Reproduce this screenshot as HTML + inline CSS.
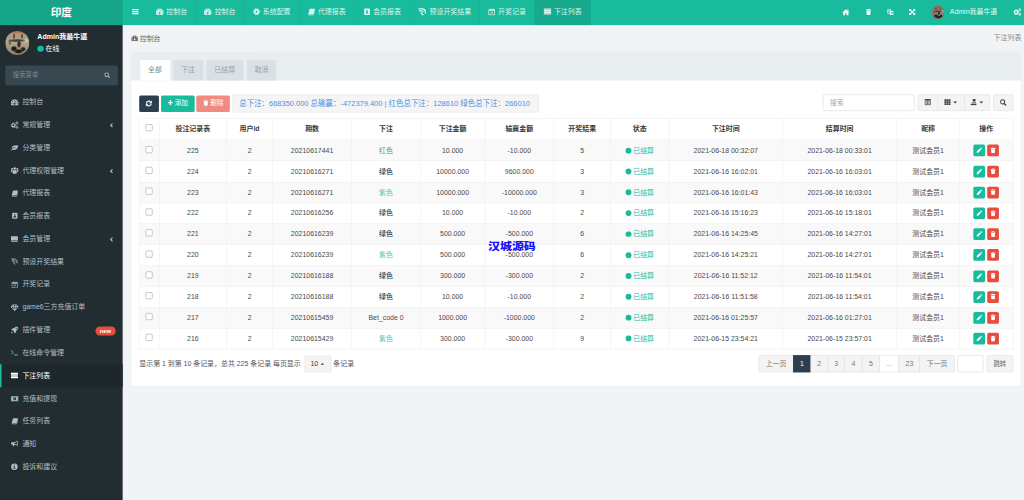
<!DOCTYPE html><html lang="zh-CN"><head><meta charset="utf-8"><title>印度</title><style>
*{box-sizing:border-box;margin:0;padding:0}
html,body{width:1024px;height:500px;overflow:hidden;background:#f1f4f6}
body{font-family:"Liberation Sans","Noto Sans CJK SC",sans-serif;font-size:13px;color:#444}
#pg{position:absolute;left:0;top:0;width:1920px;height:938px;transform:scale(.5333333);transform-origin:0 0;background:#f1f4f6;overflow:hidden}
.ic{fill:currentColor;vertical-align:middle;display:inline-block}
.abs{position:absolute}
#hdr{position:absolute;left:0;top:0;width:1920px;height:47px;background:#18bc9c}
#logo{position:absolute;left:0;top:0;width:230px;height:47px;background:#15a589;color:#fff;font-size:20px;font-weight:bold;text-align:center;line-height:46px}
.ttab{position:absolute;top:0;height:47px;line-height:43px;color:rgba(255,255,255,.86);font-size:13px;text-align:center;border-right:1px solid rgba(0,0,0,.06);white-space:nowrap}
.ttab .ic{margin-right:5px;position:relative;top:-1px}
.ttab.act{background:#16a98c}
.hic{position:absolute;top:0;height:47px;line-height:43px;color:#fff;text-align:center;width:30px}
#side{position:absolute;left:0;top:47px;width:230px;height:891px;background:#222d32}
.mi{position:absolute;left:0;width:230px;height:42.6px;line-height:42.6px;color:#b0bfc6;font-size:13px;white-space:nowrap}
.mi .ic{position:absolute;left:20px;top:13.800px}
.mi span.t{position:absolute;left:42px}
.mi .chev{position:absolute;left:203px;top:16px;color:#b8c7ce;line-height:0}
.mi.act{background:#1e282c;color:#fff;border-left:3px solid #18bc9c}
.mi.act .ic{left:17px}.mi.act span.t{left:39px}
.btn{position:absolute;border-radius:3px;text-align:center;white-space:nowrap;font-size:13px}
table{border-collapse:collapse;table-layout:fixed;position:absolute;left:261.2px;top:221.8px;width:1638px;font-size:13px;color:#4a4a4a}
th,td{border:1px solid #ececec;text-align:center;vertical-align:middle;white-space:nowrap;overflow:hidden;padding:0;line-height:18px}
th{height:40.5px;font-weight:bold;color:#3a3a3a;padding-bottom:1.500px}
td{height:39.2px}
tbody tr:nth-child(odd){background:#f9f9f9}
.cb{display:inline-block;width:13px;height:13px;border:1px solid #999;border-radius:2.500px;background:#fff;vertical-align:middle;position:relative;top:-2.800px}
.ok{color:#18bc9c}
.dot{display:inline-block;width:10.800px;height:10.800px;border-radius:50%;background:#18bc9c;margin-right:3.500px;position:relative;top:1.200px}
.ab{display:inline-block;width:22.300px;height:22px;border-radius:3px;color:#fff;line-height:19px;vertical-align:middle}
.pg{position:absolute;top:665.6px;height:32.600px;line-height:31px;border:1px solid #ddd;background:#f4f4f4;color:#777;text-align:center;font-size:13px;margin-left:-1px}
</style></head><body><div id="pg">
<div id="hdr">
<div id="logo">印度</div>
<div class="abs" style="left:247px;top:15px;color:#fff;line-height:0"><svg class="ic" viewBox="0 0 16 16" width="13.5" height="13.5" style=""><path d="M1 2.200h14v2.700H1zM1 6.650h14v2.700H1zM1 11.100h14v2.700H1z"/></svg></div>
<div class="ttab" style="left:276.6px;width:90.40px"><svg class="ic" viewBox="0 0 16 16" width="15" height="15" style=""><path fill-rule="evenodd" d="M8 2a8 8 0 0 1 6.9 12c-.2.3-.4.4-.8.4H1.900c-.4 0-.6-.1-.8-.4A8 8 0 0 1 8 2zM8 3.200a1 1 0 1 0 0 2 1 1 0 0 0 0-2zM3.700 5a1 1 0 1 0 0 2 1 1 0 0 0 0-2zM12.300 5a1 1 0 1 0 0 2 1 1 0 0 0 0-2zM2.300 9a1 1 0 1 0 0 2 1 1 0 0 0 0-2zM13.700 9a1 1 0 1 0 0 2 1 1 0 0 0 0-2zM9.800 6.200l-1 3.600a1.800 1.800 0 1 1-1.100-.3l1-3.600z"/></svg>控制台</div>
<div class="ttab" style="left:367px;width:91.00px"><svg class="ic" viewBox="0 0 16 16" width="15" height="15" style=""><path fill-rule="evenodd" d="M8 2a8 8 0 0 1 6.9 12c-.2.3-.4.4-.8.4H1.900c-.4 0-.6-.1-.8-.4A8 8 0 0 1 8 2zM8 3.200a1 1 0 1 0 0 2 1 1 0 0 0 0-2zM3.700 5a1 1 0 1 0 0 2 1 1 0 0 0 0-2zM12.300 5a1 1 0 1 0 0 2 1 1 0 0 0 0-2zM2.300 9a1 1 0 1 0 0 2 1 1 0 0 0 0-2zM13.700 9a1 1 0 1 0 0 2 1 1 0 0 0 0-2zM9.800 6.200l-1 3.600a1.800 1.800 0 1 1-1.100-.3l1-3.600z"/></svg>控制台</div>
<div class="ttab" style="left:458px;width:103.60px"><svg class="ic" viewBox="0 0 16 16" width="14" height="14" style=""><g fill="none" stroke="currentColor"><circle cx="8" cy="8" r="3.900" stroke-width="3.600"/><circle cx="8" cy="8" r="6.400" stroke-width="2.200" stroke-dasharray="2.513 2.513"/></g></svg>系统配置</div>
<div class="ttab" style="left:561.6px;width:103.10px"><svg class="ic" viewBox="0 0 16 16" width="14" height="14" style=""><path d="M5.500 1.500h9.200c.6 0 .9.500.7 1.100l-2.600 9.200c-.2.700-.8 1.200-1.500 1.200H3.500c-.4 0-.5.300-.3.600.2.300.6.400 1 .400h7.600c.5 0 .9-.3 1-.8l2.300-8c.4.300.5.800.4 1.300l-2.300 8c-.3.900-1 1.500-2 1.500H3.800c-1.500 0-2.800-1.300-2.500-2.800L3.600 3.300c.3-1 1-1.800 1.900-1.800z"/></svg>代理报表</div>
<div class="ttab" style="left:664.7px;width:104.05px"><svg class="ic" viewBox="0 0 16 16" width="14" height="14" style=""><path fill-rule="evenodd" d="M3.500 1h9.500a1.500 1.500 0 0 1 1.500 1.500v11a1.500 1.500 0 0 1-1.500 1.500H3.500A1.500 1.500 0 0 1 2 13.500v-11A1.500 1.500 0 0 1 3.500 1zM8.200 4.300a1.900 1.900 0 1 0 0 3.800 1.900 1.900 0 0 0 0-3.800zM5 11.800h6.400c0-1.900-1.300-3.200-3.200-3.200S5 9.900 5 11.800z"/></svg>会员报表</div>
<div class="ttab" style="left:768.75px;width:130.25px"><svg class="ic" viewBox="0 0 16 16" width="17" height="17" style=""><path fill="none" stroke="currentColor" stroke-width="2.100" d="M1.500 3.300h7c3 0 5.200 2.500 5.200 5.500v3.200M2.500 7h4.500c1.700 0 2.800 1.200 2.800 2.800M5.500 10.200l4.500 4.500"/></svg>预设开奖结果</div>
<div class="ttab" style="left:899px;width:104.00px"><svg class="ic" viewBox="0 0 16 16" width="14" height="14" style=""><path fill-rule="evenodd" d="M2 2.500h2.200V1h1.700v1.500h4.200V1h1.700v1.500H14c.6 0 1 .4 1 1V14.500c0 .6-.4 1-1 1H2c-.6 0-1-.4-1-1V3.500c0-.6.400-1 1-1zM2.500 6v8h11V6zM5 10l1-1 1.500 1.500L10.500 7.500l1 1L7.500 12.500z"/></svg>开奖记录</div>
<div class="ttab act" style="left:1003px;width:104.20px"><svg class="ic" viewBox="0 0 16 16" width="15" height="15" style=""><path d="M.5 2h15v2.800H.5zM.5 5.300h15v2.600H.5zM.5 8.400h15v2.600H.5zM.5 11.500h15v2.700H.5z"/></svg>下注列表</div>
<div class="hic" style="left:1571px"><svg class="ic" viewBox="0 0 16 16" width="14" height="14" style=""><path d="M8 1.500L15.700 8.300H13.500V14.500H9.600V10.200H6.400V14.500H2.500V8.300H.300zM11.400 1.800h2.100v3.600l-2.100-1.800z"/></svg></div>
<div class="hic" style="left:1613.4px"><svg class="ic" viewBox="0 0 16 16" width="13" height="13" style=""><path d="M6 1h4l.7 1.300H14V4.200H2V2.300h3.300zM3 5.200h10l-.7 8.800c0 .6-.5 1-1 1H4.700c-.5 0-1-.4-1-1z"/></svg></div>
<div class="hic" style="left:1654.5px"><svg class="ic" viewBox="0 0 16 16" width="13" height="13" style=""><path fill-rule="evenodd" d="M1 1.500h8.500v3.500H15v10H6.500v-3.500H1zM2.300 2.800v7.400h4.200V5h1.700V2.800zM9 8v1h3.300c-.3.900-.8 1.700-1.500 2.300-.4-.4-.7-.8-.9-1.300H8.900c.3.700.7 1.400 1.200 1.900-.5.300-1 .5-1.600.7l.4.900c.7-.200 1.400-.500 2-.900.600.400 1.300.700 2 .900l.400-.900c-.600-.200-1.100-.400-1.600-.700.800-.800 1.400-1.800 1.700-2.900H14.500V8H12V7h-1v1z"/><path d="M3.500 4h1.500l1 4.500H5l-.2-1H3.700l-.2 1h-1zM4.200 5l-.3 1.600h.7z"/></svg></div>
<div class="hic" style="left:1695.4px"><svg class="ic" viewBox="0 0 16 16" width="13" height="13" style=""><path d="M3 3L13 13M13 3L3 13" fill="none" stroke="currentColor" stroke-width="2.800"/><path d="M.800.800h5.900L.800 6.700zM15.200.800v5.900L9.300.800zM.800 15.200V9.300l5.900 5.900zM15.200 15.200H9.300l5.900-5.900z"/></svg></div>
<div class="hic" style="left:1892px"><svg class="ic" viewBox="0 0 16 16" width="15" height="15" style=""><g fill="none" stroke="currentColor"><circle cx="5.500" cy="8.500" r="3.200" stroke-width="2.300"/><circle cx="5.500" cy="8.500" r="4.900" stroke-width="1.500" stroke-dasharray="1.924 1.924"/><circle cx="12.700" cy="3.700" r="1.600" stroke-width="1.600"/><circle cx="12.700" cy="3.700" r="2.800" stroke-width="1" stroke-dasharray="1.100 1.100"/><circle cx="12.700" cy="12.600" r="1.600" stroke-width="1.600"/><circle cx="12.700" cy="12.600" r="2.800" stroke-width="1" stroke-dasharray="1.100 1.100"/></g></svg></div>
<div class="abs" style="left:1746px;top:11px;width:25px;height:25px;border-radius:50%;background:radial-gradient(ellipse 40% 7% at 48% 40%,#4a4038 0,#4a4038 50%,transparent 100%),radial-gradient(ellipse 9% 17% at 57% 55%,#3a2822 0,#3a2822 55%,transparent 100%),radial-gradient(ellipse 15% 13% at 36% 74%,#1f1d1c 0,#1f1d1c 50%,transparent 100%),radial-gradient(ellipse 20% 10% at 55% 85%,#1d1b1a 0,#1d1b1a 55%,transparent 100%),radial-gradient(ellipse 12% 11% at 74% 76%,#262220 0,#262220 50%,transparent 100%),radial-gradient(ellipse 7% 15% at 19% 47%,#6d675c 0,#6d675c 50%,transparent 100%),radial-gradient(ellipse 6% 14% at 36% 22%,#5b5348 0,#5b5348 50%,transparent 100%),radial-gradient(ellipse 6% 12% at 70% 22%,#5b5348 0,#5b5348 50%,transparent 100%),radial-gradient(ellipse 7% 9% at 87% 40%,#a9acb4 0,#a9acb4 50%,transparent 100%),linear-gradient(#a8583a 0,#a8583a 5%,#7d7268 11%,#8f8374 45%,#7a6f60 75%,#6c6152 100%)"></div>
<div class="abs" style="left:1781px;top:0;height:47px;line-height:45px;color:rgba(255,255,255,.92);font-size:13px;white-space:nowrap">Admin我最牛逼</div>
</div>
<div id="side">
<div class="abs" style="left:10px;top:10.500px;width:45px;height:45px;border-radius:50%;background:radial-gradient(ellipse 40% 7% at 48% 40%,#4a4038 0,#4a4038 50%,transparent 100%),radial-gradient(ellipse 9% 17% at 57% 55%,#3a2822 0,#3a2822 55%,transparent 100%),radial-gradient(ellipse 15% 13% at 36% 74%,#1f1d1c 0,#1f1d1c 50%,transparent 100%),radial-gradient(ellipse 20% 10% at 55% 85%,#1d1b1a 0,#1d1b1a 55%,transparent 100%),radial-gradient(ellipse 12% 11% at 74% 76%,#262220 0,#262220 50%,transparent 100%),radial-gradient(ellipse 7% 15% at 19% 47%,#6d675c 0,#6d675c 50%,transparent 100%),radial-gradient(ellipse 6% 14% at 36% 22%,#5b5348 0,#5b5348 50%,transparent 100%),radial-gradient(ellipse 6% 12% at 70% 22%,#5b5348 0,#5b5348 50%,transparent 100%),radial-gradient(ellipse 7% 9% at 87% 40%,#c9ccd4 0,#c9ccd4 50%,transparent 100%),linear-gradient(#c9683c 0,#c9683c 5%,#a59880 11%,#b5a78d 45%,#a09378 75%,#8c8068 100%)"></div>
<div class="abs" style="left:70px;top:12px;color:#fff;font-weight:bold;font-size:13.200px;line-height:20px;white-space:nowrap">Admin我最牛逼</div>
<div class="abs" style="left:70px;top:38.500px;width:11.500px;height:11.500px;border-radius:50%;background:#18bc9c"></div>
<div class="abs" style="left:85.500px;top:34px;color:#fff;font-size:13px;line-height:20px;white-space:nowrap">在线</div>
<div class="abs" style="left:10px;top:76px;width:211px;height:36.500px;border-radius:3px;background:#374850"></div>
<div class="abs" style="left:24px;top:76px;line-height:36.500px;color:#7a8a90;font-size:12px">搜索菜单</div>
<div class="abs" style="left:195px;top:87.500px;color:#a9b6bc;line-height:0"><svg class="ic" viewBox="0 0 16 16" width="12" height="12" style=""><path fill-rule="evenodd" d="M6.700 1a5.700 5.700 0 0 1 4.700 8.900l3.800 3.800-1.900 1.900-3.800-3.800A5.700 5.700 0 1 1 6.700 1zM6.700 3.200a3.500 3.500 0 1 0 0 7 3.500 3.500 0 0 0 0-7z"/></svg></div>
<div class="mi" style="top:123.45px"><svg class="ic" viewBox="0 0 16 16" width="15" height="15" style=""><path fill-rule="evenodd" d="M8 2a8 8 0 0 1 6.9 12c-.2.3-.4.4-.8.4H1.900c-.4 0-.6-.1-.8-.4A8 8 0 0 1 8 2zM8 3.200a1 1 0 1 0 0 2 1 1 0 0 0 0-2zM3.700 5a1 1 0 1 0 0 2 1 1 0 0 0 0-2zM12.300 5a1 1 0 1 0 0 2 1 1 0 0 0 0-2zM2.300 9a1 1 0 1 0 0 2 1 1 0 0 0 0-2zM13.700 9a1 1 0 1 0 0 2 1 1 0 0 0 0-2zM9.800 6.200l-1 3.600a1.800 1.800 0 1 1-1.100-.3l1-3.600z"/></svg><span class="t">控制台</span></div>
<div class="mi" style="top:166.18px"><svg class="ic" viewBox="0 0 16 16" width="15" height="15" style=""><g fill="none" stroke="currentColor"><circle cx="5.500" cy="8.500" r="3.200" stroke-width="2.300"/><circle cx="5.500" cy="8.500" r="4.900" stroke-width="1.500" stroke-dasharray="1.924 1.924"/><circle cx="12.700" cy="3.700" r="1.600" stroke-width="1.600"/><circle cx="12.700" cy="3.700" r="2.800" stroke-width="1" stroke-dasharray="1.100 1.100"/><circle cx="12.700" cy="12.600" r="1.600" stroke-width="1.600"/><circle cx="12.700" cy="12.600" r="2.800" stroke-width="1" stroke-dasharray="1.100 1.100"/></g></svg><span class="t">常规管理</span><span class="chev"><svg class="ic" viewBox="0 0 16 16" width="12" height="12" style="position:static"><path fill="none" stroke="currentColor" stroke-width="2.600" d="M10.500 3.500L6 8l4.500 4.500"/></svg></span></div>
<div class="mi" style="top:208.91px"><svg class="ic" viewBox="0 0 16 16" width="14" height="14" style=""><path d="M15.500 2c.4 5-1.500 9.500-6.500 10.500-2 .4-3.800 0-5-.8-.8.700-1.300 1.500-1.800 2.300l-1.400-.8c.7-1.300 1.600-2.400 2.700-3.300 1.800-1.500 4-2.300 6.500-2.600v-.8c-2.800 0-5.300.9-7.300 2.400C2.200 5.500 5 3.500 8.500 3.300c2.500-.1 5-.2 7-1.300z"/></svg><span class="t">分类管理</span></div>
<div class="mi" style="top:251.64px"><svg class="ic" viewBox="0 0 16 16" width="15" height="15" style=""><path d="M8 1.500a2.700 2.700 0 1 1 0 5.400 2.700 2.700 0 0 1 0-5.400zM2.800 3a2 2 0 1 1 0 4 2 2 0 0 1 0-4zM13.200 3a2 2 0 1 1 0 4 2 2 0 0 1 0-4zM.2 7.500h3.600c-.5.800-.6 1.800-.6 2.800v1H1.500c-.8 0-1.300-.5-1.300-1.300zM15.800 7.500h-3.600c.5.800.6 1.800.6 2.800v1h1.700c.8 0 1.300-.5 1.300-1.300zM4.200 8.500c.8-1 1.800-1.300 2.500-1.300.4.300.8.500 1.300.5s.9-.2 1.300-.5c.7 0 1.700.3 2.500 1.300.4.600.5 1.500.5 2.500v2c0 1-.7 1.500-1.500 1.500H5.200c-.8 0-1.500-.5-1.500-1.500v-2c0-1 .1-1.900.5-2.500z"/></svg><span class="t">代理权限管理</span><span class="chev"><svg class="ic" viewBox="0 0 16 16" width="12" height="12" style="position:static"><path fill="none" stroke="currentColor" stroke-width="2.600" d="M10.500 3.500L6 8l4.500 4.500"/></svg></span></div>
<div class="mi" style="top:294.37px"><svg class="ic" viewBox="0 0 16 16" width="13" height="13" style="margin:.5px 0 0 1px"><path d="M5.500 1.500h9.200c.6 0 .9.500.7 1.100l-2.600 9.200c-.2.700-.8 1.200-1.500 1.200H3.500c-.4 0-.5.300-.3.600.2.300.6.400 1 .400h7.600c.5 0 .9-.3 1-.8l2.300-8c.4.300.5.800.4 1.300l-2.300 8c-.3.900-1 1.500-2 1.500H3.800c-1.500 0-2.800-1.300-2.500-2.800L3.600 3.300c.3-1 1-1.800 1.900-1.800z"/></svg><span class="t">代理报表</span></div>
<div class="mi" style="top:337.10px"><svg class="ic" viewBox="0 0 16 16" width="13" height="13" style="margin:.5px 0 0 1px"><path fill-rule="evenodd" d="M3.500 1h9.500a1.500 1.500 0 0 1 1.500 1.500v11a1.500 1.500 0 0 1-1.500 1.500H3.500A1.500 1.500 0 0 1 2 13.500v-11A1.500 1.500 0 0 1 3.500 1zM8.200 4.300a1.900 1.900 0 1 0 0 3.800 1.900 1.900 0 0 0 0-3.800zM5 11.800h6.400c0-1.900-1.300-3.200-3.200-3.200S5 9.900 5 11.800z"/></svg><span class="t">会员报表</span></div>
<div class="mi" style="top:379.83px"><svg class="ic" viewBox="0 0 16 16" width="14" height="14" style=""><path d="M.5 2h15v9H.5zM.5 12h15v1.800H.5z"/></svg><span class="t">会员管理</span><span class="chev"><svg class="ic" viewBox="0 0 16 16" width="12" height="12" style="position:static"><path fill="none" stroke="currentColor" stroke-width="2.600" d="M10.500 3.500L6 8l4.500 4.500"/></svg></span></div>
<div class="mi" style="top:422.56px"><svg class="ic" viewBox="0 0 16 16" width="14" height="14" style=""><path fill="none" stroke="currentColor" stroke-width="2.100" d="M1.500 3.300h7c3 0 5.200 2.500 5.200 5.500v3.200M2.500 7h4.500c1.700 0 2.800 1.200 2.800 2.800M5.500 10.200l4.500 4.500"/></svg><span class="t">预设开奖结果</span></div>
<div class="mi" style="top:465.29px"><svg class="ic" viewBox="0 0 16 16" width="13" height="13" style="margin:.5px 0 0 1px"><path fill-rule="evenodd" d="M2 2.500h2.200V1h1.700v1.500h4.200V1h1.700v1.500H14c.6 0 1 .4 1 1V14.500c0 .6-.4 1-1 1H2c-.6 0-1-.4-1-1V3.500c0-.6.400-1 1-1zM2.500 6v8h11V6zM5 10l1-1 1.500 1.500L10.500 7.500l1 1L7.500 12.500z"/></svg><span class="t">开奖记录</span></div>
<div class="mi" style="top:508.02px"><svg class="ic" viewBox="0 0 16 16" width="15" height="15" style=""><path fill-rule="evenodd" d="M3.800 2h8.400L16 6.500 8 15 0 6.500zM4.500 3.300L2.600 5.800h2.700zM6.500 3.300l.3 2.500h2.400l.3-2.500zM11.500 3.300l-.8 2.500h2.700zM2.500 7l4 4.500L5.300 7zM6.800 7L8 12.300 9.200 7zM10.700 7L9.500 11.500l4-4.500z"/></svg><span class="t">game6三方充值订单</span></div>
<div class="mi" style="top:550.75px"><svg class="ic" viewBox="0 0 16 16" width="14" height="14" style=""><path d="M15.500.5c.3 3.500-.8 6.300-3.500 8.500l-.5 3.500L8 15l-.3-3.300L4.300 8.300 1 8l2.500-3.500L7 4c2.200-2.700 5-3.800 8.500-3.500zM12 3a1.200 1.200 0 1 0 0 2.400 1.200 1.200 0 0 0 0-2.400zM2.500 11l2.500 2.500L1 15z"/></svg><span class="t">插件管理</span><span class="abs" style="left:179px;top:14.500px;width:37.500px;height:17px;border-radius:8.500px;background:#e74c3c;color:#fff;font-size:11px;font-weight:bold;line-height:16px;text-align:center">new</span></div>
<div class="mi" style="top:593.48px"><svg class="ic" viewBox="0 0 16 16" width="14" height="14" style=""><path fill="none" stroke="currentColor" stroke-width="1.800" d="M1.500 3.500l4 4-4 4M7.500 13h7.500"/></svg><span class="t">在线命令管理</span></div>
<div class="mi act" style="top:636.21px"><svg class="ic" viewBox="0 0 16 16" width="14" height="14" style=""><path d="M.5 2h15v2.800H.5zM.5 5.300h15v2.600H.5zM.5 8.400h15v2.600H.5zM.5 11.500h15v2.700H.5z"/></svg><span class="t">下注列表</span></div>
<div class="mi" style="top:678.94px"><svg class="ic" viewBox="0 0 16 16" width="15" height="15" style=""><path fill-rule="evenodd" d="M.5 3h15v10H.5zM2 4.500v1.700c1 0 1.700-.7 1.700-1.700zM12.300 4.500c0 1 .7 1.700 1.700 1.700V4.500zM2 9.800v1.700h1.700c0-1-.7-1.700-1.700-1.700zM14 9.800c-1 0-1.700.7-1.700 1.700H14zM8 4.700c-1.700 0-2.700 1.500-2.700 3.300s1 3.300 2.700 3.300 2.700-1.500 2.700-3.300S9.700 4.700 8 4.700zM7.600 5.800h.9v4h-.9z"/></svg><span class="t">充值和提现</span></div>
<div class="mi" style="top:721.67px"><svg class="ic" viewBox="0 0 16 16" width="13" height="13" style="margin:.5px 0 0 1px"><path d="M5.500 1.500h9.200c.6 0 .9.500.7 1.100l-2.600 9.200c-.2.700-.8 1.200-1.500 1.200H3.500c-.4 0-.5.300-.3.600.2.300.6.400 1 .400h7.600c.5 0 .9-.3 1-.8l2.300-8c.4.300.5.800.4 1.300l-2.300 8c-.3.900-1 1.500-2 1.500H3.800c-1.500 0-2.800-1.300-2.500-2.800L3.600 3.300c.3-1 1-1.800 1.900-1.800z"/></svg><span class="t">任务列表</span></div>
<div class="mi" style="top:764.40px"><svg class="ic" viewBox="0 0 16 16" width="14" height="14" style=""><path d="M15 1v12c-2.500-2-5-3-8-3.200l.8 3.700H5L4 9.800H2.500C1.500 9.800 1 9.200 1 8.500V6c0-.8.500-1.300 1.500-1.300H6c3.500 0 6.500-1.500 9-3.700zM13.500 4C12 5.200 10 6 8 6.300V8.200c2 .2 4 1 5.500 2.200z"/></svg><span class="t">通知</span></div>
<div class="mi" style="top:807.13px"><svg class="ic" viewBox="0 0 16 16" width="14" height="14" style=""><path fill-rule="evenodd" d="M8 1a7 7 0 1 1 0 14A7 7 0 0 1 8 1zM7 3.500v2h2v-2zM6 7v1.500h1V11H6v1.500h4V11H9V7z"/></svg><span class="t">投诉和建议</span></div>
</div>
<div class="abs" style="left:246px;top:61.500px;height:20px;line-height:20px;color:#666;font-size:13px;white-space:nowrap"><svg class="ic" viewBox="0 0 16 16" width="13" height="13" style="position:relative;top:-1px;margin-right:3px"><path fill-rule="evenodd" d="M8 2a8 8 0 0 1 6.9 12c-.2.3-.4.4-.8.4H1.900c-.4 0-.6-.1-.8-.4A8 8 0 0 1 8 2zM8 3.200a1 1 0 1 0 0 2 1 1 0 0 0 0-2zM3.700 5a1 1 0 1 0 0 2 1 1 0 0 0 0-2zM12.300 5a1 1 0 1 0 0 2 1 1 0 0 0 0-2zM2.300 9a1 1 0 1 0 0 2 1 1 0 0 0 0-2zM13.700 9a1 1 0 1 0 0 2 1 1 0 0 0 0-2zM9.800 6.200l-1 3.600a1.800 1.800 0 1 1-1.100-.3l1-3.600z"/></svg>控制台</div>
<div class="abs" style="right:5px;top:61px;height:20px;line-height:20px;color:#8a8a8a;font-size:13px;white-space:nowrap">下注列表</div>
<div class="abs" style="left:246px;top:96px;width:1668.400px;height:628.300px;background:#fff;border-radius:3px;box-shadow:0 1px 1px rgba(0,0,0,.06)"></div>
<div class="abs" style="left:246px;top:96px;width:1668.400px;height:55.400px;background:#e8edf0;border-radius:3px 3px 0 0"></div>
<div class="abs" style="left:262.5px;top:112.500px;width:56.25px;height:38.900px;line-height:35.500px;background:#fff;color:#7b8a8b;text-align:center;font-size:13px;border-radius:1px 1px 0 0">全部</div>
<div class="abs" style="left:324.8px;top:112.500px;width:55.80px;height:38.900px;line-height:35.500px;background:#d9e0e6;color:#95a5a6;text-align:center;font-size:13px;border-radius:1px 1px 0 0">下注</div>
<div class="abs" style="left:387.2px;top:112.500px;width:68.40px;height:38.900px;line-height:35.500px;background:#d9e0e6;color:#95a5a6;text-align:center;font-size:13px;border-radius:1px 1px 0 0">已结算</div>
<div class="abs" style="left:462.7px;top:112.500px;width:55.70px;height:38.900px;line-height:35.500px;background:#d9e0e6;color:#95a5a6;text-align:center;font-size:13px;border-radius:1px 1px 0 0">取消</div>
<div class="btn" style="left:260.600px;top:179px;width:37px;height:31px;line-height:27px;background:#2c3e50;color:#fff"><svg class="ic" viewBox="0 0 16 16" width="14" height="14" style=""><path d="M2.900 8a5.100 5.100 0 0 1 8.900-3.400M13.100 8a5.100 5.100 0 0 1-8.900 3.400" fill="none" stroke="currentColor" stroke-width="2.500"/><path d="M14.300 1.500v5.800H8.500zM1.700 14.500V8.700h5.800z"/></svg></div>
<div class="btn" style="left:302px;top:179px;width:62.700px;height:31px;line-height:28px;font-size:12.400px;background:#18bc9c;color:#fff"><svg class="ic" viewBox="0 0 16 16" width="11" height="11" style="position:relative;top:-1px;margin-right:2px"><path d="M6.200 1.500h3.600v4.700h4.700v3.600H9.800v4.700H6.200V9.800H1.500V6.200h4.700z"/></svg>添加</div>
<div class="btn" style="left:368.400px;top:179px;width:62.800px;height:31px;line-height:28px;font-size:12.400px;background:#ef8b80;color:#fff"><svg class="ic" viewBox="0 0 16 16" width="12" height="12" style="position:relative;top:-1px;margin-right:2px"><path d="M6 1h4l.7 1.300H14V4.200H2V2.300h3.300zM3 5.200h10l-.7 8.800c0 .6-.5 1-1 1H4.700c-.5 0-1-.4-1-1z"/></svg>删除</div>
<div class="btn" style="left:435.500px;top:177px;width:574.200px;height:34px;line-height:32px;background:#f5f5f5;border:1px solid #e3e3e3;color:#4a90e2;font-size:14px;text-align:left;padding-left:12px">总下注：668350.000 总输赢：-472379.400 | 红色总下注：128610 绿色总下注：266010</div>
<div class="btn" style="left:1543px;top:176.600px;width:172.400px;height:31px;line-height:29px;background:#fff;border:1px solid #d2d6de;color:#aaa;text-align:left;padding-left:12px;border-radius:3px">搜索</div>
<div class="btn" style="left:1721px;top:176.600px;width:134.700px;height:31px;background:#f4f4f4;border:1px solid #ddd"></div>
<div class="abs" style="left:1757.800px;top:176.600px;width:1px;height:31px;background:#ddd"></div>
<div class="abs" style="left:1807.900px;top:176.600px;width:1px;height:31px;background:#ddd"></div>
<div class="abs" style="left:1733px;top:184.500px;color:#444;line-height:0"><svg class="ic" viewBox="0 0 16 16" width="13" height="13" style=""><path fill-rule="evenodd" d="M2.500 1h11a1.500 1.500 0 0 1 1.500 1.500v11a1.500 1.500 0 0 1-1.500 1.500h-11A1.500 1.500 0 0 1 1 13.500v-11A1.500 1.500 0 0 1 2.500 1zM2.300 4.200v9.500h11.400V4.200z"/><path opacity=".4" d="M2.300 4.200h11.400v9.500H2.300z"/><path d="M7.500 4.200h1v9.500h-1z"/></svg></div>
<div class="abs" style="left:1770px;top:185px;color:#444;line-height:0;white-space:nowrap"><svg class="ic" viewBox="0 0 16 16" width="13" height="13" style=""><path d="M1 1.500h4.300v3.900H1zM5.900 1.500h4.300v3.900H5.900zM10.800 1.500h4.300v3.900h-4.300zM1 6h4.300v3.900H1zM5.900 6h4.300v3.900H5.900zM10.800 6h4.300v3.900h-4.300zM1 10.500h4.300v3.900H1zM5.900 10.500h4.300v3.900H5.900zM10.800 10.500h4.300v3.900h-4.300z"/></svg><svg class="ic" viewBox="0 0 16 16" width="12" height="12" style="margin-left:2px"><path d="M3 6h10l-5 5z"/></svg></div>
<div class="abs" style="left:1819px;top:185px;color:#444;line-height:0;white-space:nowrap"><svg class="ic" viewBox="0 0 16 16" width="13" height="13" style=""><path d="M6 1h6.500v5.800H6z"/><path opacity=".55" d="M4 7.500h9l1.500 4h-12z"/><path d="M1.500 12.300h13v2.700h-13z"/></svg><svg class="ic" viewBox="0 0 16 16" width="12" height="12" style="margin-left:2px"><path d="M3 6h10l-5 5z"/></svg></div>
<div class="btn" style="left:1862.400px;top:176.600px;width:37.200px;height:31px;line-height:27px;background:#f4f4f4;border:1px solid #ddd;color:#444"><svg class="ic" viewBox="0 0 16 16" width="14" height="14" style=""><path fill-rule="evenodd" d="M6.700 1a5.700 5.700 0 0 1 4.700 8.900l3.800 3.800-1.900 1.900-3.800-3.800A5.700 5.700 0 1 1 6.700 1zM6.700 3.200a3.500 3.500 0 1 0 0 7 3.500 3.500 0 0 0 0-7z"/></svg></div>
<table><colgroup><col style="width:36.45px"><col style="width:126.85px"><col style="width:86.06px"><col style="width:148.3px"><col style="width:129px"><col style="width:120.7px"><col style="width:129.4px"><col style="width:106.5px"><col style="width:109.5px"><col style="width:212.8px"><col style="width:214.3px"><col style="width:117.4px"><col style="width:100.7px"></colgroup><thead><tr><th><span class="cb"></span></th><th>投注记录表</th><th>用户id</th><th>期数</th><th>下注</th><th>下注金额</th><th>输赢金额</th><th>开奖结果</th><th>状态</th><th>下注时间</th><th>结算时间</th><th>昵称</th><th>操作</th></tr></thead><tbody>
<tr><td><span class="cb"></span></td><td>225</td><td>2</td><td>20210617441</td><td style="color:#45a56c">红色</td><td>10.000</td><td>-10.000</td><td>5</td><td class="ok"><span class="dot"></span>已结算</td><td>2021-06-18 00:32:07</td><td>2021-06-18 00:33:01</td><td>测试会员1</td><td><span class="ab" style="background:#18bc9c"><svg class="ic" viewBox="0 0 16 16" width="13" height="13" style=""><path d="M11.500 1.500l3 3-1.700 1.700-3-3zM8.800 4.200l3 3-7 7H1.800v-3z"/></svg></span><span class="ab" style="background:#e74c3c;margin-left:3.500px"><svg class="ic" viewBox="0 0 16 16" width="12" height="12" style=""><path d="M6 1h4l.7 1.300H14V4.200H2V2.300h3.300zM3 5.200h10l-.7 8.800c0 .6-.5 1-1 1H4.700c-.5 0-1-.4-1-1z"/></svg></span></td></tr>
<tr><td><span class="cb"></span></td><td>224</td><td>2</td><td>20210616271</td><td style="color:#2c3e50;font-weight:500">绿色</td><td>10000.000</td><td>9600.000</td><td>3</td><td class="ok"><span class="dot"></span>已结算</td><td>2021-06-16 16:02:01</td><td>2021-06-16 16:03:01</td><td>测试会员1</td><td><span class="ab" style="background:#18bc9c"><svg class="ic" viewBox="0 0 16 16" width="13" height="13" style=""><path d="M11.500 1.500l3 3-1.700 1.700-3-3zM8.800 4.200l3 3-7 7H1.800v-3z"/></svg></span><span class="ab" style="background:#e74c3c;margin-left:3.500px"><svg class="ic" viewBox="0 0 16 16" width="12" height="12" style=""><path d="M6 1h4l.7 1.300H14V4.200H2V2.300h3.300zM3 5.200h10l-.7 8.800c0 .6-.5 1-1 1H4.700c-.5 0-1-.4-1-1z"/></svg></span></td></tr>
<tr><td><span class="cb"></span></td><td>223</td><td>2</td><td>20210616271</td><td style="color:#3ec9c6">紫色</td><td>10000.000</td><td>-10000.000</td><td>3</td><td class="ok"><span class="dot"></span>已结算</td><td>2021-06-16 16:01:43</td><td>2021-06-16 16:03:01</td><td>测试会员1</td><td><span class="ab" style="background:#18bc9c"><svg class="ic" viewBox="0 0 16 16" width="13" height="13" style=""><path d="M11.500 1.500l3 3-1.700 1.700-3-3zM8.800 4.200l3 3-7 7H1.800v-3z"/></svg></span><span class="ab" style="background:#e74c3c;margin-left:3.500px"><svg class="ic" viewBox="0 0 16 16" width="12" height="12" style=""><path d="M6 1h4l.7 1.300H14V4.200H2V2.300h3.300zM3 5.200h10l-.7 8.800c0 .6-.5 1-1 1H4.700c-.5 0-1-.4-1-1z"/></svg></span></td></tr>
<tr><td><span class="cb"></span></td><td>222</td><td>2</td><td>20210616256</td><td style="color:#2c3e50;font-weight:500">绿色</td><td>10.000</td><td>-10.000</td><td>2</td><td class="ok"><span class="dot"></span>已结算</td><td>2021-06-16 15:16:23</td><td>2021-06-16 15:18:01</td><td>测试会员1</td><td><span class="ab" style="background:#18bc9c"><svg class="ic" viewBox="0 0 16 16" width="13" height="13" style=""><path d="M11.500 1.500l3 3-1.700 1.700-3-3zM8.800 4.200l3 3-7 7H1.800v-3z"/></svg></span><span class="ab" style="background:#e74c3c;margin-left:3.500px"><svg class="ic" viewBox="0 0 16 16" width="12" height="12" style=""><path d="M6 1h4l.7 1.300H14V4.200H2V2.300h3.300zM3 5.200h10l-.7 8.800c0 .6-.5 1-1 1H4.700c-.5 0-1-.4-1-1z"/></svg></span></td></tr>
<tr><td><span class="cb"></span></td><td>221</td><td>2</td><td>20210616239</td><td style="color:#2c3e50;font-weight:500">绿色</td><td>500.000</td><td>-500.000</td><td>6</td><td class="ok"><span class="dot"></span>已结算</td><td>2021-06-16 14:25:45</td><td>2021-06-16 14:27:01</td><td>测试会员1</td><td><span class="ab" style="background:#18bc9c"><svg class="ic" viewBox="0 0 16 16" width="13" height="13" style=""><path d="M11.500 1.500l3 3-1.700 1.700-3-3zM8.800 4.200l3 3-7 7H1.800v-3z"/></svg></span><span class="ab" style="background:#e74c3c;margin-left:3.500px"><svg class="ic" viewBox="0 0 16 16" width="12" height="12" style=""><path d="M6 1h4l.7 1.300H14V4.200H2V2.300h3.300zM3 5.200h10l-.7 8.800c0 .6-.5 1-1 1H4.700c-.5 0-1-.4-1-1z"/></svg></span></td></tr>
<tr><td><span class="cb"></span></td><td>220</td><td>2</td><td>20210616239</td><td style="color:#3ec9c6">紫色</td><td>500.000</td><td>-500.000</td><td>6</td><td class="ok"><span class="dot"></span>已结算</td><td>2021-06-16 14:25:21</td><td>2021-06-16 14:27:01</td><td>测试会员1</td><td><span class="ab" style="background:#18bc9c"><svg class="ic" viewBox="0 0 16 16" width="13" height="13" style=""><path d="M11.500 1.500l3 3-1.700 1.700-3-3zM8.800 4.200l3 3-7 7H1.800v-3z"/></svg></span><span class="ab" style="background:#e74c3c;margin-left:3.500px"><svg class="ic" viewBox="0 0 16 16" width="12" height="12" style=""><path d="M6 1h4l.7 1.300H14V4.200H2V2.300h3.300zM3 5.200h10l-.7 8.800c0 .6-.5 1-1 1H4.700c-.5 0-1-.4-1-1z"/></svg></span></td></tr>
<tr><td><span class="cb"></span></td><td>219</td><td>2</td><td>20210616188</td><td style="color:#2c3e50;font-weight:500">绿色</td><td>300.000</td><td>-300.000</td><td>2</td><td class="ok"><span class="dot"></span>已结算</td><td>2021-06-16 11:52:12</td><td>2021-06-16 11:54:01</td><td>测试会员1</td><td><span class="ab" style="background:#18bc9c"><svg class="ic" viewBox="0 0 16 16" width="13" height="13" style=""><path d="M11.500 1.500l3 3-1.700 1.700-3-3zM8.800 4.200l3 3-7 7H1.800v-3z"/></svg></span><span class="ab" style="background:#e74c3c;margin-left:3.500px"><svg class="ic" viewBox="0 0 16 16" width="12" height="12" style=""><path d="M6 1h4l.7 1.300H14V4.200H2V2.300h3.300zM3 5.200h10l-.7 8.800c0 .6-.5 1-1 1H4.700c-.5 0-1-.4-1-1z"/></svg></span></td></tr>
<tr><td><span class="cb"></span></td><td>218</td><td>2</td><td>20210616188</td><td style="color:#2c3e50;font-weight:500">绿色</td><td>10.000</td><td>-10.000</td><td>2</td><td class="ok"><span class="dot"></span>已结算</td><td>2021-06-16 11:51:58</td><td>2021-06-16 11:54:01</td><td>测试会员1</td><td><span class="ab" style="background:#18bc9c"><svg class="ic" viewBox="0 0 16 16" width="13" height="13" style=""><path d="M11.500 1.500l3 3-1.700 1.700-3-3zM8.800 4.200l3 3-7 7H1.800v-3z"/></svg></span><span class="ab" style="background:#e74c3c;margin-left:3.500px"><svg class="ic" viewBox="0 0 16 16" width="12" height="12" style=""><path d="M6 1h4l.7 1.300H14V4.200H2V2.300h3.300zM3 5.200h10l-.7 8.800c0 .6-.5 1-1 1H4.700c-.5 0-1-.4-1-1z"/></svg></span></td></tr>
<tr><td><span class="cb"></span></td><td>217</td><td>2</td><td>20210615459</td><td>Bet_code 0</td><td>1000.000</td><td>-1000.000</td><td>2</td><td class="ok"><span class="dot"></span>已结算</td><td>2021-06-16 01:25:57</td><td>2021-06-16 01:27:01</td><td>测试会员1</td><td><span class="ab" style="background:#18bc9c"><svg class="ic" viewBox="0 0 16 16" width="13" height="13" style=""><path d="M11.500 1.500l3 3-1.700 1.700-3-3zM8.800 4.200l3 3-7 7H1.800v-3z"/></svg></span><span class="ab" style="background:#e74c3c;margin-left:3.500px"><svg class="ic" viewBox="0 0 16 16" width="12" height="12" style=""><path d="M6 1h4l.7 1.300H14V4.200H2V2.300h3.300zM3 5.200h10l-.7 8.800c0 .6-.5 1-1 1H4.700c-.5 0-1-.4-1-1z"/></svg></span></td></tr>
<tr><td><span class="cb"></span></td><td>216</td><td>2</td><td>20210615429</td><td style="color:#3ec9c6">紫色</td><td>300.000</td><td>-300.000</td><td>9</td><td class="ok"><span class="dot"></span>已结算</td><td>2021-06-15 23:54:21</td><td>2021-06-15 23:57:01</td><td>测试会员1</td><td><span class="ab" style="background:#18bc9c"><svg class="ic" viewBox="0 0 16 16" width="13" height="13" style=""><path d="M11.500 1.500l3 3-1.700 1.700-3-3zM8.800 4.200l3 3-7 7H1.800v-3z"/></svg></span><span class="ab" style="background:#e74c3c;margin-left:3.500px"><svg class="ic" viewBox="0 0 16 16" width="12" height="12" style=""><path d="M6 1h4l.7 1.300H14V4.200H2V2.300h3.300zM3 5.200h10l-.7 8.800c0 .6-.5 1-1 1H4.700c-.5 0-1-.4-1-1z"/></svg></span></td></tr>
</tbody></table>
<div class="abs" style="left:915px;top:445.800px;font-size:18.500px;font-weight:900;color:#1010ff;line-height:32px;white-space:nowrap;transform:scaleX(1.21);transform-origin:0 50%">汉城源码</div>
<div class="abs" style="left:261.200px;top:667px;height:31px;line-height:31px;color:#555;font-size:13px;white-space:nowrap">显示第 1 到第 10 条记录，总共 225 条记录 每页显示</div>
<div class="btn" style="left:570.600px;top:667px;width:50.400px;height:31.200px;line-height:29px;background:#f4f4f4;border:1px solid #ddd;color:#444">10<svg class="ic" viewBox="0 0 16 16" width="11" height="11" style="margin-left:2px;position:relative;top:-1px"><path d="M3 10h10l-5-5z"/></svg></div>
<div class="abs" style="left:625px;top:667px;height:31px;line-height:31px;color:#555;font-size:13px;white-space:nowrap">条记录</div>
<div class="pg" style="left:1423.4px;width:65.50px;border-radius:3px 0 0 3px;">上一页</div>
<div class="pg" style="left:1487.9px;width:33.60px;background:#2c3e50;border-color:#2c3e50;color:#fff;">1</div>
<div class="pg" style="left:1520.5px;width:33.25px;">2</div>
<div class="pg" style="left:1552.75px;width:32.65px;">3</div>
<div class="pg" style="left:1584.4px;width:33.30px;">4</div>
<div class="pg" style="left:1616.7px;width:34.30px;">5</div>
<div class="pg" style="left:1650px;width:36.90px;background:#fff;color:#999;">...</div>
<div class="pg" style="left:1685.9px;width:40.50px;">23</div>
<div class="pg" style="left:1725.4px;width:65.50px;border-radius:0 3px 3px 0;">下一页</div>
<div class="btn" style="left:1794.600px;top:665.600px;width:49.400px;height:32.600px;background:#fff;border:1px solid #d2d6de"></div>
<div class="btn" style="left:1849.700px;top:665.600px;width:50px;height:32.600px;line-height:30px;background:#f4f4f4;border:1px solid #ddd;color:#666;font-size:12px">跳转</div>
</div></body></html>
